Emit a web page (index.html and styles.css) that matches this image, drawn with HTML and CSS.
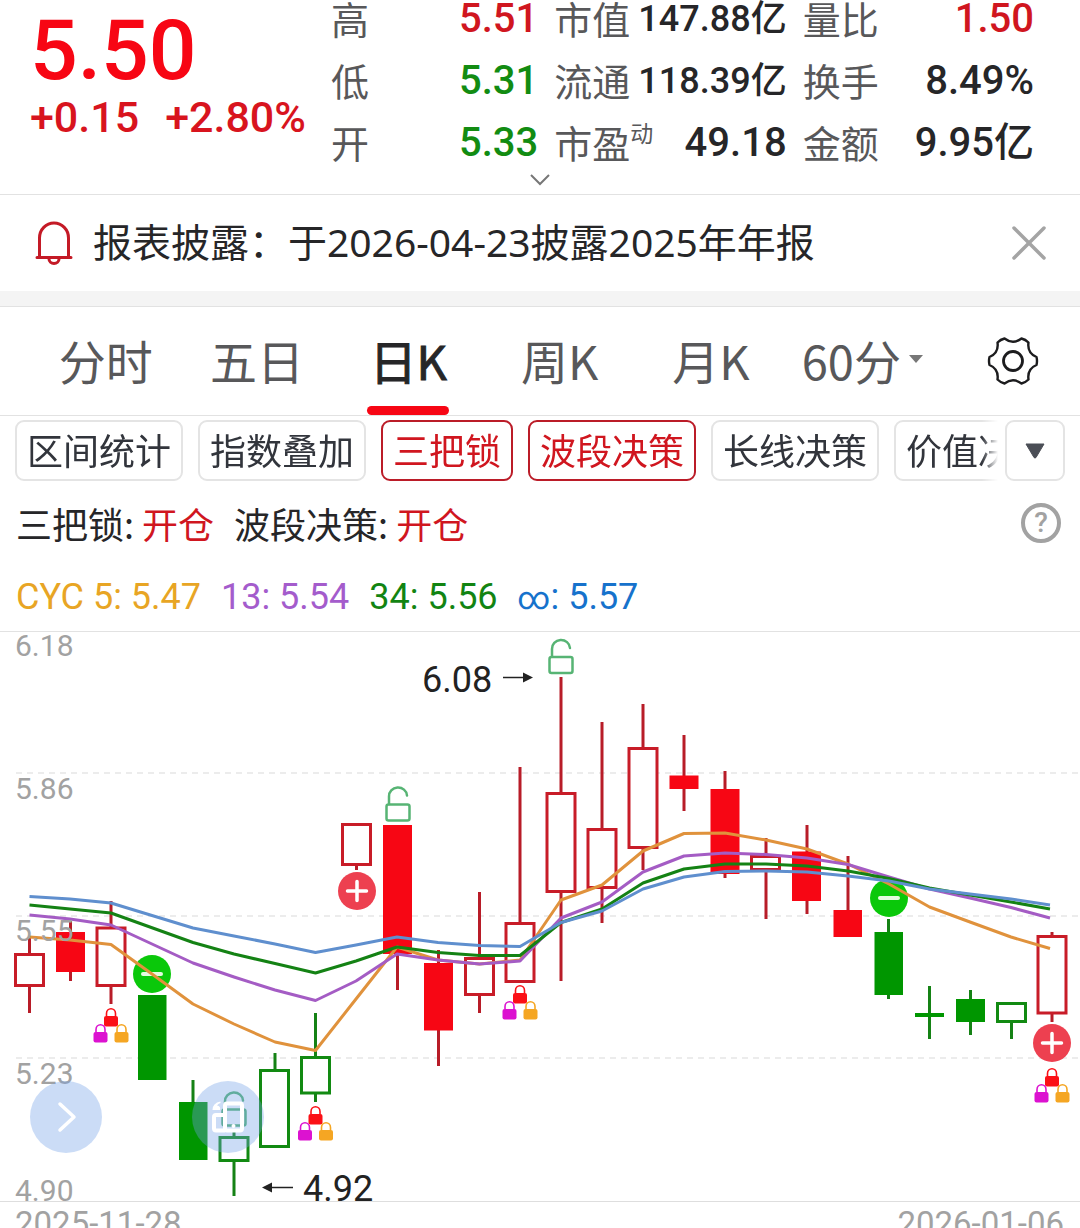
FILE: index.html
```html
<!DOCTYPE html>
<html lang="zh-CN">
<head>
<meta charset="utf-8">
<meta name="viewport" content="width=device-width, initial-scale=1">
<title>日K</title>
<link rel="stylesheet" href="styles.css">
</head>
<body>
<header class="quote">
  <div class="quote-main">
    <div class="price">
      <div class="price-last">5.50</div>
      <div class="price-change"><span>+0.15</span><span>+2.80%</span></div>
    </div>
    <dl class="stats">
      <div class="stat"><dt>高</dt><dd class="up">5.51</dd></div>
      <div class="stat"><dt>市值</dt><dd class="long">147.88亿</dd></div>
      <div class="stat"><dt>量比</dt><dd class="up">1.50</dd></div>
      <div class="stat"><dt>低</dt><dd class="down">5.31</dd></div>
      <div class="stat"><dt>流通</dt><dd class="long">118.39亿</dd></div>
      <div class="stat"><dt>换手</dt><dd>8.49%</dd></div>
      <div class="stat"><dt>开</dt><dd class="down">5.33</dd></div>
      <div class="stat"><dt>市盈<sup>动</sup></dt><dd>49.18</dd></div>
      <div class="stat"><dt>金额</dt><dd>9.95亿</dd></div>
    </dl>
  </div>
  <button class="quote-more" type="button" aria-label="展开">
    <svg width="22" height="14" viewBox="0 0 22 14"><path d="M2 2l9 9 9-9" fill="none" stroke="#777" stroke-width="2"/></svg>
  </button>
</header>

<section class="notice">
  <svg class="notice-bell" width="38" height="44" viewBox="0 0 38 44" fill="none" stroke="#c41a26" stroke-width="3" stroke-linecap="round">
    <path d="M4.500 36V17a14.500 15 0 0 1 29 0v19M2 36.500h34M14 38a5 4.500 0 0 0 10 0"/>
  </svg>
  <p class="notice-text">报表披露：于2026-04-23披露2025年年报</p>
  <button class="notice-close" type="button" aria-label="关闭">
    <svg width="34" height="34" viewBox="0 0 34 34"><path d="M2 2l30 30M32 2L2 32" stroke="#a4a4a4" stroke-width="3.500" stroke-linecap="round"/></svg>
  </button>
</section>

<nav class="tabs">
  <button class="tab" type="button">分时</button>
  <button class="tab" type="button">五日</button>
  <button class="tab tab-active" type="button">日K</button>
  <button class="tab" type="button">周K</button>
  <button class="tab" type="button">月K</button>
  <button class="tab" type="button">60分<svg width="14" height="8" viewBox="0 0 14 8"><path d="M0 0h14L7 8z" fill="#777"/></svg></button>
  <button class="tab-settings" type="button" aria-label="设置">
    <svg width="52" height="52" viewBox="-26 -26 52 52" fill="none" stroke="#1c1c1e" stroke-width="2.400" stroke-linejoin="round">
      <path d="M23.500-4Q24.500 0 23.500 4Q14 8 15.500 18.500Q12.500 21.500 8.500 22.500Q0 16 -8.500 22.500Q-12.500 21.500 -15.500 18.500Q-14 8 -23.500 4Q-24.500 0 -23.500-4Q-14-8 -15.500-18.500Q-12.500-21.500 -8.500-22.500Q0-16 8.500-22.500Q12.500-21.500 15.500-18.500Q14-8 23.500-4z"/>
      <circle r="9.500" stroke-width="2.800"/>
    </svg>
  </button>
</nav>

<div class="chips">
  <div class="chips-scroll">
    <button class="chip" type="button">区间统计</button>
    <button class="chip" type="button">指数叠加</button>
    <button class="chip chip-on" type="button">三把锁</button>
    <button class="chip chip-on" type="button">波段决策</button>
    <button class="chip" type="button">长线决策</button>
    <button class="chip" type="button">价值决策</button>
  </div>
  <button class="chips-more" type="button" aria-label="更多指标">
    <svg width="20" height="16" viewBox="0 0 20 16"><path d="M1 1h18L11 14.500q-1 1-2 0z" fill="#4b4e56" stroke="#4b4e56" stroke-width="1" stroke-linejoin="round"/></svg>
  </button>
</div>

<div class="signals">
  <p class="signal">三把锁: <strong>开仓</strong></p>
  <p class="signal">波段决策: <strong>开仓</strong></p>
  <button class="help" type="button" aria-label="帮助">?</button>
</div>

<div class="legend">
  <span class="c-orange">CYC 5: 5.47</span>
  <span class="c-purple">13: 5.54</span>
  <span class="c-green">34: 5.56</span>
  <span class="c-blue"><span class="infinity">∞</span>: 5.57</span>
</div>

<main class="chart">
  <svg class="chart-plot" viewBox="0 632 1080 596" role="img" aria-label="日K线图">
    <defs>
      <g id="lock">
        <path d="M-4.500 8V5.500a4.500 4.700 0 0 1 9 0V8" fill="none" stroke="currentColor" stroke-width="1.600"/>
        <rect x="-7" y="8" width="14" height="10.500" rx="2" fill="currentColor"/>
      </g>
      <g id="locks">
        <use href="#lock" color="#fb1016"/>
        <use href="#lock" x="-10.500" y="16" color="#dc12d0"/>
        <use href="#lock" x="10.500" y="16" color="#f5a623"/>
      </g>
      <g id="unlock" fill="none" stroke="#57b474" stroke-width="2.500" stroke-linecap="round">
        <rect x="-11" y="17.500" width="23" height="16" rx="2"/>
        <path d="M-8.500 17V9.500a9 8.500 0 0 1 18-1"/>
      </g>
      <g id="buy">
        <circle r="19" fill="#ed4050"/>
        <path d="M-9.500 0h19M0-9.500v19" stroke="#fff" stroke-width="3.500" stroke-linecap="round"/>
      </g>
      <g id="sell">
        <circle r="19" fill="#0ac80a"/>
        <path d="M-9 0h18" stroke="#e4fbe0" stroke-width="4" stroke-linecap="round"/>
      </g>
    </defs>

    <path class="grid" d="M16 773H1080M16 916H1080M16 1058H1080"/>
    <path class="axis" d="M0 1201.500H1080"/>

    <path class="wick-up" d="M29.500 938V954M29.500 986V1013M70.500 921V981M111 901V927M111 986V1004M356.500 866V870M397.500 954V990M438.500 950V1066M479.500 892V958M479.500 996V1013M520 767V923M561 677V793M561 892V981M602 722V829M602 888V923M643 704V748M643 848V870M684 735V811M725 771V878M766 838V855M766 870V919M807 825V914M848 856V910M1052 932V936M1052 1013V1022"/>
    <path class="hollow-up" d="M15.500 954.500h28v31h-28zM97 928h28v57.500H97zM342.500 824.500h28v40h-28zM465.500 958.500h28v36h-28zM506 923.500h28v58h-28zM547 793.500h28v98h-28zM588 829.500h28v58h-28zM629 748.500h28v99h-28zM751.500 856.500h28v13h-28zM1038 936.500h28v76.500h-28z"/>
    <path class="solid-up" d="M56 932h29v40h-29zM383 825h29v129h-29zM424 963h29v67.500h-29zM669.500 775.500h29v13.500h-29zM710.500 789h29v85h-29zM792 851.500h29v49.500h-29zM833.500 910h28.500v27h-28.500z"/>

    <path class="wick-down" d="M193 1080V1102M234 1132V1137M234 1162V1196M275 1053V1070M315.500 1013V1057M315.500 1094V1102M888.500 919V999M929.500 986V1039M970.500 990V1035M1011.500 1022V1039"/>
    <path class="hollow-down" d="M220 1137.500h28v23h-28zM260.500 1070.500h28v76h-28zM301.500 1057.500h28v35.500h-28zM997.500 1003.500h28v18h-28z"/>
    <path class="solid-down" d="M138 995h28.500v85H138zM179 1102h28.500v58H179zM874.500 932h28.500v63h-28.500zM915 1013h29v4h-29zM956 999h29v23h-29z"/>

    <use href="#locks" x="111" y="1008"/>
    <use href="#locks" x="315.500" y="1106"/>
    <use href="#locks" x="520" y="985"/>
    <use href="#locks" x="1052" y="1068"/>
    <use href="#unlock" x="397.500" y="787"/>
    <use href="#unlock" x="560.500" y="639.500"/>
    <use href="#unlock" x="233.500" y="1092"/>
    <use href="#buy" x="357" y="891"/>
    <use href="#buy" x="1052" y="1043"/>
    <use href="#sell" x="152" y="974"/>
    <use href="#sell" x="889" y="898"/>

    <g class="ma">
      <polyline stroke="#e0923c" points="29.500,937 70,940 111,944.500 152,974 193,1004 234,1024 275,1042 315.500,1050.500 356,999 397,947 438,960 479.500,964 520,960 561,900 602,885 643,851 684,833.500 725,833 766,840 807,849 848,864 889,884 929.500,907 970,922 1011,937 1050,948.500"/>
      <polyline stroke="#a45cc4" points="29.500,915 70,919 111,925 193,963 234,977 275,990 315.500,1000.500 356,981 397,954 438,960 479.500,964 520,961 561,918 602,902 643,872 684,856 725,853 766,854.500 807,858 848,864.500 889,877 929.500,889 970,898 1011,907.500 1050,918"/>
      <polyline stroke="#148214" points="29.500,905 70,909 111,913 193,942.500 234,954 275,963.500 315.500,973 356,961 397,947 438,952.500 479.500,955.500 520,955.500 561,922.500 602,909 643,883 684,869 725,864 766,864 807,866 848,871 889,878.500 929.500,888 970,895 1011,902 1050,909"/>
      <polyline stroke="#5f8fce" points="29.500,896.500 70,899 111,903 193,928 234,936 275,944 315.500,952.500 356,945 397,937 438,942.500 479.500,945.500 520,946.500 561,922.500 602,911 643,889 684,877 725,871.500 766,871 807,872 848,876 889,881 929.500,889 970,894 1011,899 1050,905"/>
    </g>

    <g class="scale">
      <text x="15" y="656">6.18</text>
      <text x="15" y="799">5.86</text>
      <text x="15" y="941">5.55</text>
      <text x="15" y="1084">5.23</text>
      <text x="15" y="1201">4.90</text>
    </g>
    <g class="dates">
      <text x="15" y="1235">2025-11-28</text>
      <text x="1064" y="1235" text-anchor="end">2026-01-06</text>
    </g>
    <g class="extreme">
      <text x="422" y="692">6.08</text>
      <path d="M503 677.500H524" stroke="#222" stroke-width="1.500"/>
      <path d="M523 672.500l10 5-10 5z"/>
      <text x="303" y="1201">4.92</text>
      <path d="M271 1187.500H293" stroke="#222" stroke-width="1.500"/>
      <path d="M272 1182.500l-10 5 10 5z"/>
    </g>
  </svg>
  <div class="chart-tools">
    <button class="tool" type="button" aria-label="展开工具">
      <svg width="72" height="72" viewBox="0 0 72 72"><path d="M30 23l14 13-14 13" fill="none" stroke="#fff" stroke-width="3.500" stroke-linecap="round" stroke-linejoin="round"/></svg>
    </button>
    <button class="tool" type="button" aria-label="横竖屏切换">
      <svg width="72" height="72" viewBox="0 0 72 72" fill="none" stroke="#fff" stroke-width="4" stroke-linejoin="round">
        <rect x="33" y="22.500" width="17" height="27" rx="2"/>
        <path d="M32 34H24a2 2 0 0 0-2 2V47.500a2 2 0 0 0 2 2h9"/>
        <path d="M28.500 20.500q-8 1.500-8 8.500h7.500q1-4-3-4.500 1-2 3.500-2.500z" fill="#fff" stroke="none"/>
        <circle cx="41.500" cy="45" r="2" fill="#fff" stroke="none"/>
      </svg>
    </button>
  </div>
</main>
</body>
</html>
```
FILE: styles.css
```css
* {
  box-sizing: border-box;
}

body {
  margin: 0;
  background: #fff;
  color: #262628;
  font-family: Roboto, "Noto Sans CJK SC", sans-serif;
  overflow-x: hidden;
}

p, dl, dd {
  margin: 0;
}

button {
  padding: 0;
  border: 0;
  background: none;
  color: inherit;
  font: inherit;
}

svg {
  display: block;
}

/* Quote header */
.quote {
  border-bottom: 1px solid #e2e2e2;
}

.quote-main {
  display: grid;
  grid-template-columns: 301px 1fr;
  padding: 0 46px 0 30px;
}

.price {
  color: #f70614;
  font-weight: 500;
  white-space: nowrap;
}

.price-last {
  font-size: 84px;
  line-height: 102px;
}

.price-change {
  display: flex;
  gap: 26px;
  color: #d8141e;
  font-size: 43px;
  line-height: 30px;
}

.stats {
  display: grid;
  grid-template-columns: 207fr 232fr 231fr;
  gap: 22px 16px;
}

.stat {
  display: flex;
  justify-content: space-between;
  height: 40px;
  line-height: 42px;
  white-space: nowrap;
}

.stat dt {
  color: #58585a;
  font-size: 38px;
}

.stat sup {
  font-size: 23px;
  line-height: 20px;
  vertical-align: 16px;
}

.stat dd {
  font-size: 40px;
  font-weight: 500;
  line-height: 38px;
}

.stat .long {
  font-size: 36px;
}

.stat .up {
  color: #d0161f;
}

.stat .down {
  color: #128c12;
}

.quote-more {
  display: flex;
  justify-content: center;
  width: 100%;
  padding: 9px 0 7px;
}

/* Notice */
.notice {
  display: flex;
  align-items: center;
  height: 112px;
  padding: 0 34px 15px 35px;
  border-bottom: 1px solid #e2e2e2;
  box-shadow: inset 0 -15px #f4f4f4;
}

.notice-text {
  flex: 1;
  margin-left: 20px;
  padding-bottom: 2px;
  font-family: "Noto Sans", "Noto Sans CJK SC", sans-serif;
  font-size: 39px;
  line-height: 60px;
  white-space: nowrap;
}

/* Period tabs */
.tabs {
  display: flex;
  height: 109px;
  padding-left: 30px;
  border-bottom: 1px solid #e2e2e2;
}

.tab {
  position: relative;
  display: flex;
  flex: 1;
  align-items: center;
  justify-content: center;
  gap: 8px;
  padding-bottom: 4px;
  color: #58585a;
  font-family: "Noto Sans CJK SC", sans-serif;
  font-size: 47px;
  white-space: nowrap;
}

.tab-active {
  color: #262628;
  -webkit-text-stroke: 1px #262628;
}

.tab-active::after {
  content: "";
  position: absolute;
  bottom: 0;
  left: 50%;
  width: 82px;
  height: 9px;
  margin-left: -41px;
  border-radius: 5px;
  background: #f70614;
}

.tab-settings {
  display: flex;
  flex: 0 0 142px;
  align-items: center;
  justify-content: flex-end;
  padding-right: 41px;
}

/* Indicator chips */
.chips {
  display: flex;
  gap: 7px;
  padding: 4px 15px 0;
}

.chips-scroll {
  display: flex;
  flex: 1;
  gap: 15px;
  min-width: 0;
  overflow: hidden;
  -webkit-mask-image: linear-gradient(to left, transparent, #000 16px);
  mask-image: linear-gradient(to left, transparent, #000 16px);
}

.chip {
  flex: none;
  height: 61px;
  padding: 6px 10px 0;
  border: 2px solid #e4e4e4;
  border-radius: 9px;
  color: #32353c;
  font-size: 36px;
  line-height: 51px;
}

.chip-on {
  border-color: #bb1c28;
  color: #d0161f;
}

.chips-more {
  display: flex;
  flex: 0 0 60px;
  align-items: center;
  justify-content: center;
  border: 2px solid #e4e4e4;
  border-radius: 9px;
}

/* Signals and indicator legend */
.signals {
  display: flex;
  align-items: center;
  gap: 20px;
  height: 84px;
  padding: 0 19px 0 16px;
  font-family: "Noto Sans CJK SC", sans-serif;
  font-size: 36px;
  line-height: 50px;
}

.signal strong {
  color: #d0161f;
  font-weight: 400;
}

.help {
  width: 40px;
  height: 40px;
  margin-left: auto;
  border: 4px solid #a2a2a2;
  border-radius: 50%;
  color: #a2a2a2;
  font-family: Roboto, sans-serif;
  font-size: 28px;
  font-weight: 500;
  line-height: 32px;
}

.legend {
  display: flex;
  align-items: center;
  gap: 20px;
  height: 67px;
  padding: 0 16px 2px;
  border-bottom: 1px solid #e2e2e2;
  font-size: 36px;
  line-height: 42px;
  white-space: nowrap;
}

.infinity {
  font-size: 32px;
}

.c-orange { color: #e8a524; }
.c-purple { color: #a45ccc; }
.c-green { color: #128412; }
.c-blue { color: #1672cc; }

/* Candlestick chart */
.chart {
  position: relative;
}

.chart-plot {
  width: 100%;
  height: auto;
  overflow: hidden;
}

.grid {
  fill: none;
  stroke: #ececec;
  stroke-width: 2;
  stroke-dasharray: 6 5;
}

.axis {
  stroke: #dedede;
}

.wick-up, .hollow-up, .wick-down, .hollow-down {
  fill: none;
  stroke-width: 3;
}

.wick-up { stroke: #b81c28; }
.hollow-up { fill: #fff; stroke: #c81c28; }
.solid-up { fill: #f70614; }
.wick-down { stroke: #158215; }
.hollow-down { stroke: #128a12; }
.solid-down { fill: #009600; }

.ma {
  fill: none;
  stroke-width: 3;
  stroke-linejoin: round;
}

.scale {
  fill: #a2a2a2;
  font-size: 30px;
}

.dates {
  fill: #a2a2a2;
  font-size: 33px;
}

.extreme {
  fill: #222;
  font-size: 36px;
}

.chart-tools {
  position: absolute;
  bottom: 75px;
  left: 30px;
  display: flex;
  gap: 90px;
}

.tool {
  width: 72px;
  height: 72px;
  border-radius: 50%;
  background: rgba(115, 160, 231, 0.37);
}
```
